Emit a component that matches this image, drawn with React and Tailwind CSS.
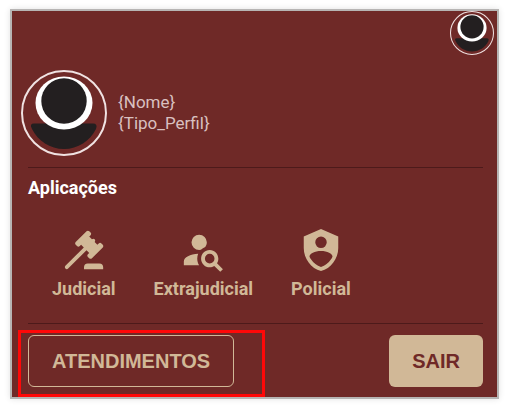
function Avatar({ className }) {
  return (
    <svg viewBox="0 0 86 86" className={className} role="img" aria-label="Avatar">
      <path d="M13 53.5H72Q77 53.5 75 59C69 71 57 79 43 79C29 79 17 71 11 59Q8 53.5 13 53.5Z" fill="#231f20" />
      <ellipse cx="43" cy="33" rx="28.5" ry="26.5" fill="#fff" />
      <circle cx="43" cy="31" r="22.7" fill="#231f20" />
      <circle cx="43" cy="43" r="42" fill="none" stroke="#f0e2e2" strokeWidth="2" />
    </svg>
  );
}

function GavelIcon({ className }) {
  return (
    <svg viewBox="0 0 24 24" fill="currentColor" className={className} aria-hidden="true">
      <path d="M2.3,20.28L11.9,10.68L10.5,9.26L9.78,9.97C9.39,10.36 8.76,10.36 8.37,9.97L7.66,9.26C7.27,8.87 7.27,8.24 7.66,7.85L13.32,2.19C13.71,1.8 14.34,1.8 14.73,2.19L15.44,2.9C15.83,3.29 15.83,3.92 15.44,4.31L14.73,5L16.15,6.43C16.54,6.04 17.17,6.04 17.56,6.43C17.95,6.82 17.95,7.46 17.56,7.85L18.97,9.26L19.68,8.55C20.07,8.16 20.71,8.16 21.1,8.55L21.8,9.26C22.19,9.65 22.19,10.29 21.8,10.68L16.15,16.33C15.76,16.72 15.12,16.72 14.73,16.33L14.03,15.63C13.63,15.24 13.63,14.6 14.03,14.21L14.73,13.5L13.32,12.09L3.71,21.7C3.32,22.09 2.69,22.09 2.3,21.7C1.91,21.31 1.91,20.67 2.3,20.28M20,19A2,2 0 0,1 22,21V22H12V21A2,2 0 0,1 14,19H20Z" />
    </svg>
  );
}

function AccountSearchIcon({ className }) {
  return (
    <svg viewBox="0 0 24 24" fill="currentColor" className={className} aria-hidden="true">
      <path d="M15.5,12C18,12 20,14 20,16.5C20,17.38 19.75,18.21 19.31,18.9L22.39,22L21,23.39L17.88,20.32C17.19,20.75 16.37,21 15.5,21C13,21 11,19 11,16.5C11,14 13,12 15.5,12M15.5,14A2.5,2.5 0 0,0 13,16.5A2.5,2.5 0 0,0 15.5,19A2.5,2.5 0 0,0 18,16.5A2.5,2.5 0 0,0 15.5,14M10,4A4,4 0 0,1 14,8C14,8.91 13.69,9.75 13.18,10.43C12.32,10.75 11.55,11.26 10.91,11.9L10,12A4,4 0 0,1 6,8A4,4 0 0,1 10,4M2,20V18C2,15.88 5.31,14.14 9.5,14C9.18,14.78 9,15.62 9,16.5C9,17.79 9.38,19 10,20H2Z" />
    </svg>
  );
}

function ShieldAccountIcon({ className }) {
  return (
    <svg viewBox="0 0 24 24" fill="currentColor" className={className} aria-hidden="true">
      <path d="M12,1L3,5V11C3,16.55 6.84,21.74 12,23C17.16,21.74 21,16.55 21,11V5L12,1M12,5A3,3 0 0,1 15,8A3,3 0 0,1 12,11A3,3 0 0,1 9,8A3,3 0 0,1 12,5M17.13,17C15.92,18.85 14.11,20.24 12,20.92C9.89,20.24 8.08,18.85 6.87,17C6.53,16.5 6.24,16 6,15.47C6,13.82 8.71,12.47 12,12.47C15.29,12.47 18,13.79 18,15.47C17.76,16 17.47,16.5 17.13,17Z" />
    </svg>
  );
}

const apps = [
  { label: "Judicial", Icon: GavelIcon },
  { label: "Extrajudicial", Icon: AccountSearchIcon },
  { label: "Policial", Icon: ShieldAccountIcon },
];

export default function App() {
  return (
    <main className="bg-white py-[9px] pr-[9px] pl-[10px] font-['Roboto',sans-serif]">
      <section className="border-2 border-[#b7b5b4] bg-[#6f2927] pb-[10px] shadow-[0_0_6px_rgba(0,0,0,0.12)]">
        <header className="flex justify-end pr-[3px]">
          <button type="button" aria-label="Perfil">
            <Avatar className="size-11" />
          </button>
        </header>

        <div className="mt-[15px] flex items-center gap-[11px] pl-[9px]">
          <Avatar className="size-[86px]" />
          <p className="text-[17px] leading-[21px] text-[#d9c0c0]">
            {"{Nome}"}
            <br />
            {"{Tipo_Perfil}"}
          </p>
        </div>

        <div className="mt-[11px] px-4 pr-[14px]">
          <hr className="border-[#4d1a1a]" />
          <h2 className="mt-[9px] text-lg leading-[22px] font-bold text-white">Aplicações</h2>
          <nav className="mt-[28px] flex gap-[38px] pl-6 text-[#d1b897]">
            {apps.map(({ label, Icon }) => (
              <a key={label} href="#" className="flex flex-col items-center">
                <Icon className="size-[46px]" />
                <span className="mt-[5px] text-lg leading-[22px] font-bold">{label}</span>
              </a>
            ))}
          </nav>
          <hr className="mt-[23px] border-[#4d1a1a]" />
          <div className="mt-[11px] flex justify-between font-['Liberation_Sans',Arial,sans-serif] text-xl font-bold">
            <div className="relative">
              <button
                type="button"
                className="h-[52px] rounded-md border border-[#d1b897] px-[23px] text-[#d1b897]"
              >
                ATENDIMENTOS
              </button>
              <div className="pointer-events-none absolute -top-[5px] -right-[31px] -bottom-[10px] -left-[10px] border-[3px] border-[#ff0808]" />
            </div>
            <button type="button" className="h-[52px] rounded-md bg-[#d1b897] px-[23px] text-[#6f2927]">
              SAIR
            </button>
          </div>
        </div>
      </section>
    </main>
  );
}
